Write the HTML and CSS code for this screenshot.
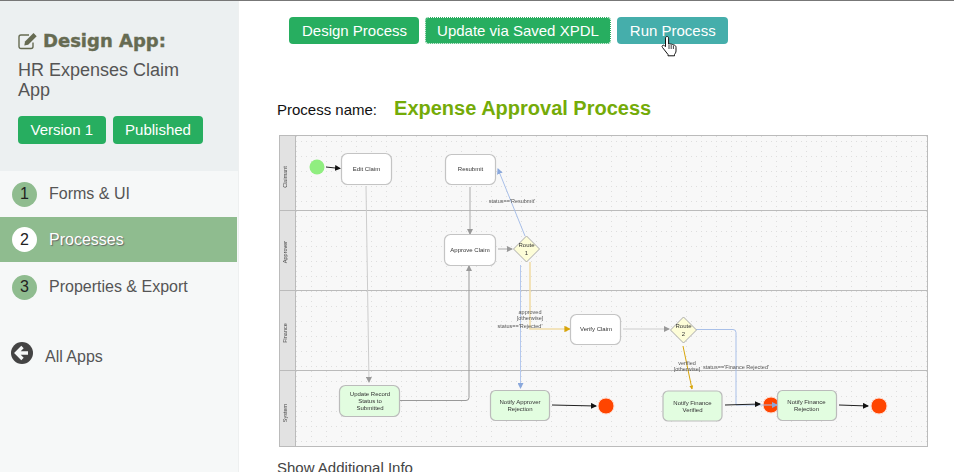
FILE: index.html
```html
<!DOCTYPE html>
<html lang="en">
<head>
    <meta charset="UTF-8">
    <title>Design App</title>
    <link rel="stylesheet" href="styles.css">
</head>
<body>
    <aside class="sidebar">
        <div class="app-head">
            <h1>
                <svg class="edit-icon" viewBox="0 0 20 18" width="20" height="18">
                    <path d="M15 10.5v4a2 2 0 0 1-2 2H3a2 2 0 0 1-2-2V5a2 2 0 0 1 2-2h8" fill="none" stroke="#666b52" stroke-width="1.4"/>
                    <path d="M7 9.5 15.5 1l3.2 3.2-8.5 8.5-3.900.8z" fill="#666b52"/>
                </svg>
                Design App:
            </h1>
            <p class="app-name">HR Expenses Claim App</p>
            <div class="labels">
                <span class="label">Version 1</span>
                <span class="label">Published</span>
            </div>
        </div>
        <nav class="steps">
            <a class="step"><span class="num">1</span>Forms &amp; UI</a>
            <a class="step active"><span class="num">2</span>Processes</a>
            <a class="step last"><span class="num">3</span>Properties &amp; Export</a>
        </nav>
        <a class="all-apps">
            <svg viewBox="0 0 22 22" width="22" height="22">
                <circle cx="11" cy="11" r="11" fill="#444"/>
                <path d="M11.500 5 5.500 11l6 6M6 11h11" fill="none" stroke="#f7f9f9" stroke-width="3.400"/>
            </svg>
            <span>All Apps</span>
        </a>
    </aside>

    <main class="content">
        <div class="actions">
            <a class="btn">Design Process</a>
            <a class="btn focused">Update via Saved XPDL</a>
            <a class="btn hover">Run Process</a>
            <svg class="cursor" viewBox="0 0 20 22" width="20" height="22">
                <path d="M6 1.500c1 0 1.600.7 1.600 1.600v6l1-.3 1 .2 1 .2 1 .3 1 .3c1.500.4 2.400 1.200 2.400 2.600v3.500c0 1.500-.8 2.600-1.500 3.600v1.300H7v-1.300L1.500 12.500c-.6-.7-.5-1.500 0-2 .6-.5 1.400-.4 2 .2l1 1V3.100C4.500 2.200 5 1.500 6 1.500z" fill="#fff" stroke="#111" stroke-width="1"/>
                <path d="M8 10v4M10.200 10v4M12.400 10.500V14" stroke="#111" stroke-width=".8"/>
            </svg>
        </div>

        <div class="process-title">
            <span class="process-label">Process name:</span>
            <span class="process-name">Expense Approval Process</span>
        </div>

        <svg class="diagram" viewBox="279 135 650 313" width="650" height="313">
            <defs>
                <pattern id="dots" x="296" y="141" width="15" height="15" patternUnits="userSpaceOnUse">
                    <path d="M0 0h1v1H0zM5 0h1v1H5zM10 0h1v1h-1zM0 5h1v1H0zM0 10h1v1H0z" fill="#dedede"/>
                </pattern>
                <marker id="m-black" markerWidth="6" markerHeight="6" refX="5" refY="3" orient="auto"><path d="M0 0 6 3 0 6z" fill="#111"/></marker>
                <marker id="m-gray" markerWidth="6" markerHeight="6" refX="5" refY="3" orient="auto"><path d="M0 0 6 3 0 6z" fill="#999"/></marker>
                <marker id="m-blue" markerWidth="6" markerHeight="6" refX="5" refY="3" orient="auto"><path d="M0 0 6 3 0 6z" fill="#8aa8dc"/></marker>
                <marker id="m-gold" markerWidth="4" markerHeight="4" refX="3.500" refY="2" orient="auto"><path d="M0 0 4 2 0 4z" fill="#d8a50a"/></marker>
            </defs>

            <rect x="279.500" y="135.500" width="648" height="311" fill="#f8f8f8"/>
            <rect x="296" y="136" width="631" height="310" fill="url(#dots)"/>
            <rect x="280" y="136" width="15" height="310" fill="#e2e2e2"/>
            <g class="lane-lines">
                <path d="M279.500 210.500H928M279.500 290.500H928M279.500 370.500H928M295.500 135V447"/>
                <rect x="279.500" y="135.500" width="648" height="311" fill="none"/>
            </g>
            <g class="lane-text">
                <text transform="translate(287 177) rotate(-90)">Claimant</text>
                <text transform="translate(287 252) rotate(-90)">Approver</text>
                <text transform="translate(287 333) rotate(-90)">Finance</text>
                <text transform="translate(287 413) rotate(-90)">System</text>
            </g>

            <circle cx="317" cy="167" r="7.500" fill="#90ee80"/>
            <g class="end-events">
                <circle cx="606" cy="406" r="8"/>
                <circle cx="771" cy="405" r="8"/>
                <circle cx="879" cy="406" r="8"/>
            </g>

            <g fill="none" stroke-width="1">
                <path d="M326 167 340 168.500" stroke="#222" marker-end="url(#m-black)"/>
                <path d="M366 186 369 382" stroke="#ccc" marker-end="url(#m-gray)"/>
                <path d="M470 187V234" stroke="#aaa" marker-end="url(#m-gray)"/>
                <path d="M399 400.500H466q3 0 3-3V266" stroke="#999" marker-end="url(#m-gray)"/>
                <path d="M498 249H512" stroke="#aaa" marker-end="url(#m-gray)"/>
                <path d="M525 236 498 169" stroke="#a8bfe8" marker-end="url(#m-blue)"/>
                <path d="M520.500 265V388" stroke="#b4c8ee" marker-end="url(#m-blue)"/>
                <path d="M530 262V329H570" stroke="#f0dca8" stroke-width="1.600" marker-end="url(#m-gold)"/>
                <path d="M623 329H669" stroke="#ccc" marker-end="url(#m-gray)"/>
                <path d="M683 346 692 389" stroke="#d8a50a" marker-end="url(#m-gold)"/>
                <path d="M696 329.500H733q3 0 3 3V405H777" stroke="#a8bfe8" marker-end="url(#m-blue)"/>
                <path d="M552 405 596 406" stroke="#222" marker-end="url(#m-black)"/>
                <path d="M725 405 760 404" stroke="#222" marker-end="url(#m-black)"/>
                <path d="M839 405 868 406" stroke="#222" marker-end="url(#m-black)"/>
            </g>

            <g class="task">
                <rect x="341.500" y="153.500" width="50" height="31" rx="6"/>
                <rect x="445.500" y="154.500" width="50" height="30" rx="6"/>
                <rect x="444.500" y="234.500" width="51" height="31" rx="6"/>
                <rect x="570.500" y="314.500" width="50" height="30" rx="6"/>
            </g>
            <g class="task auto">
                <rect x="339.500" y="385.500" width="60" height="31" rx="6"/>
                <rect x="490.500" y="390.500" width="59" height="30" rx="5"/>
                <rect x="663" y="391" width="59" height="30" rx="5"/>
                <rect x="777.500" y="390.500" width="59" height="30" rx="5"/>
            </g>
            <g class="gateway">
                <path d="M526.500 236 539.500 249 526.500 262 513.500 249z"/>
                <path d="M683.500 317 696.500 330 683.500 343 670.500 330z"/>
            </g>

            <g class="node-text">
                <text x="366.500" y="171">Edit Claim</text>
                <text x="470.500" y="171">Resubmit</text>
                <text x="470" y="252">Approve Claim</text>
                <text x="596" y="331">Verify Claim</text>
                <text x="526.500" y="247">Route</text>
                <text x="526.500" y="255">1</text>
                <text x="683.500" y="328">Route</text>
                <text x="683.500" y="336">2</text>
                <text x="370" y="396">Update Record</text>
                <text x="370" y="402.500">Status to</text>
                <text x="370" y="409.500">Submitted</text>
                <text x="520" y="404">Notify Approver</text>
                <text x="520" y="411">Rejection</text>
                <text x="692.500" y="405">Notify Finance</text>
                <text x="692.500" y="411.500">Verified</text>
                <text x="806.500" y="404">Notify Finance</text>
                <text x="806.500" y="411">Rejection</text>
            </g>
            <g class="edge-text">
                <text x="512" y="203">status=='Resubmit'</text>
                <text x="530" y="314">approved</text>
                <text x="530" y="320">[otherwise]</text>
                <text x="520" y="328">status=='Rejected'</text>
                <text x="687" y="365">verified</text>
                <text x="687" y="371">[otherwise]</text>
                <text x="736" y="369">status=='Finance Rejected'</text>
            </g>
        </svg>

        <div class="more-info">Show Additional Info</div>
    </main>
</body>
</html>
```

FILE: styles.css
```css
body {
    font-family: "Liberation Sans", Arial, sans-serif;
    margin: 0;
    height: 472px;
    overflow: hidden;
    display: flex;
    background-color: #fff;
    border-top: 1px solid #777;
    box-sizing: border-box;
}
.sidebar {
    width: 239px;
    flex-shrink: 0;
    background-color: #f6f8f8;
    border-right: 1px solid #eef0f0;
    box-sizing: border-box;
}
.app-head {
    background-color: #ecf0f1;
    height: 170px;
    padding: 29px 18px 0;
    box-sizing: border-box;
}
.app-head h1 {
    margin: 0;
    font-family: "DejaVu Sans", sans-serif;
    font-size: 18px;
    line-height: 22px;
    font-weight: bold;
    color: #666b52;
    -webkit-text-stroke: 0.4px #666b52;
    display: flex;
    align-items: center;
    gap: 5px;
}
.app-name {
    margin: 8px 0 0;
    font-size: 18px;
    line-height: 20px;
    color: #555;
    width: 170px;
}
.labels {
    display: flex;
    gap: 7px;
    margin-top: 16px;
}
.label {
    background-color: #27ae60;
    color: #fff;
    font-size: 15px;
    line-height: 28px;
    padding: 0 12.500px;
    border-radius: 4px;
}
.steps {
    display: flex;
    flex-direction: column;
}
.step {
    height: 46px;
    display: flex;
    align-items: center;
    padding-left: 12px;
    color: #555;
    font-size: 16px;
}
.step.active {
    background-color: #8fbc8f;
    color: #fff;
    text-shadow: 1px 1px 1px #666;
    height: 45px;
    margin-right: 1px;
}
.step.last {
    height: 49px;
    padding-top: 1px;
    box-sizing: border-box;
}
.num {
    width: 25px;
    height: 25px;
    border-radius: 50%;
    background-color: #8fbc8f;
    color: #222;
    text-shadow: none;
    display: flex;
    align-items: center;
    justify-content: center;
    margin-right: 12px;
}
.step.active .num {
    background-color: #fff;
}
.all-apps {
    display: flex;
    gap: 12px;
    margin: 31px 0 0 11px;
    color: #555;
    font-size: 16px;
}
.all-apps span {
    margin-top: 6px;
}
.content {
    flex: 1;
    padding: 16px 0 0 38px;
    position: relative;
}
.actions {
    display: flex;
    gap: 6px;
    padding-left: 12px;
}
.btn {
    background-color: #27ae60;
    color: #fff;
    font-size: 15px;
    line-height: 27px;
    padding: 0 12px 0 13px;
    border-radius: 4px;
}
.btn.focused {
    outline: 1px dotted #fff;
    outline-offset: -1px;
    padding: 0 12px;
}
.btn.hover {
    background-color: #45aeab;
}
.cursor {
    position: absolute;
    left: 422px;
    top: 34px;
}
.process-title {
    display: flex;
    align-items: baseline;
    gap: 17px;
    margin-top: 53px;
}
.process-label {
    font-size: 15px;
    color: #111;
}
.process-name {
    font-size: 20px;
    font-weight: bold;
    color: #74ab08;
}
.diagram {
    display: block;
    margin: 15px 0 0 2px;
    filter: blur(0.4px);
}
.lane-lines {
    fill: none;
    stroke: #bbb;
}
.lane-text text {
    font-size: 5.500px;
    fill: #444;
    text-anchor: middle;
}
.task rect {
    fill: #fff;
    stroke: #c4c4c4;
    stroke-width: 1.200;
}
.task.auto rect {
    fill: #e2fde0;
    stroke: #bbb;
}
.gateway path {
    fill: #fdfdd8;
    stroke: #aaa;
}
.end-events circle {
    fill: #ff4500;
    stroke: #ffdcd0;
    stroke-width: 1;
}
.node-text text {
    font-size: 6px;
    fill: #333;
    text-anchor: middle;
}
.edge-text text {
    font-size: 5.500px;
    fill: #555;
    text-anchor: middle;
}
.more-info {
    margin-top: 11px;
    font-size: 15px;
    color: #444;
}
```
